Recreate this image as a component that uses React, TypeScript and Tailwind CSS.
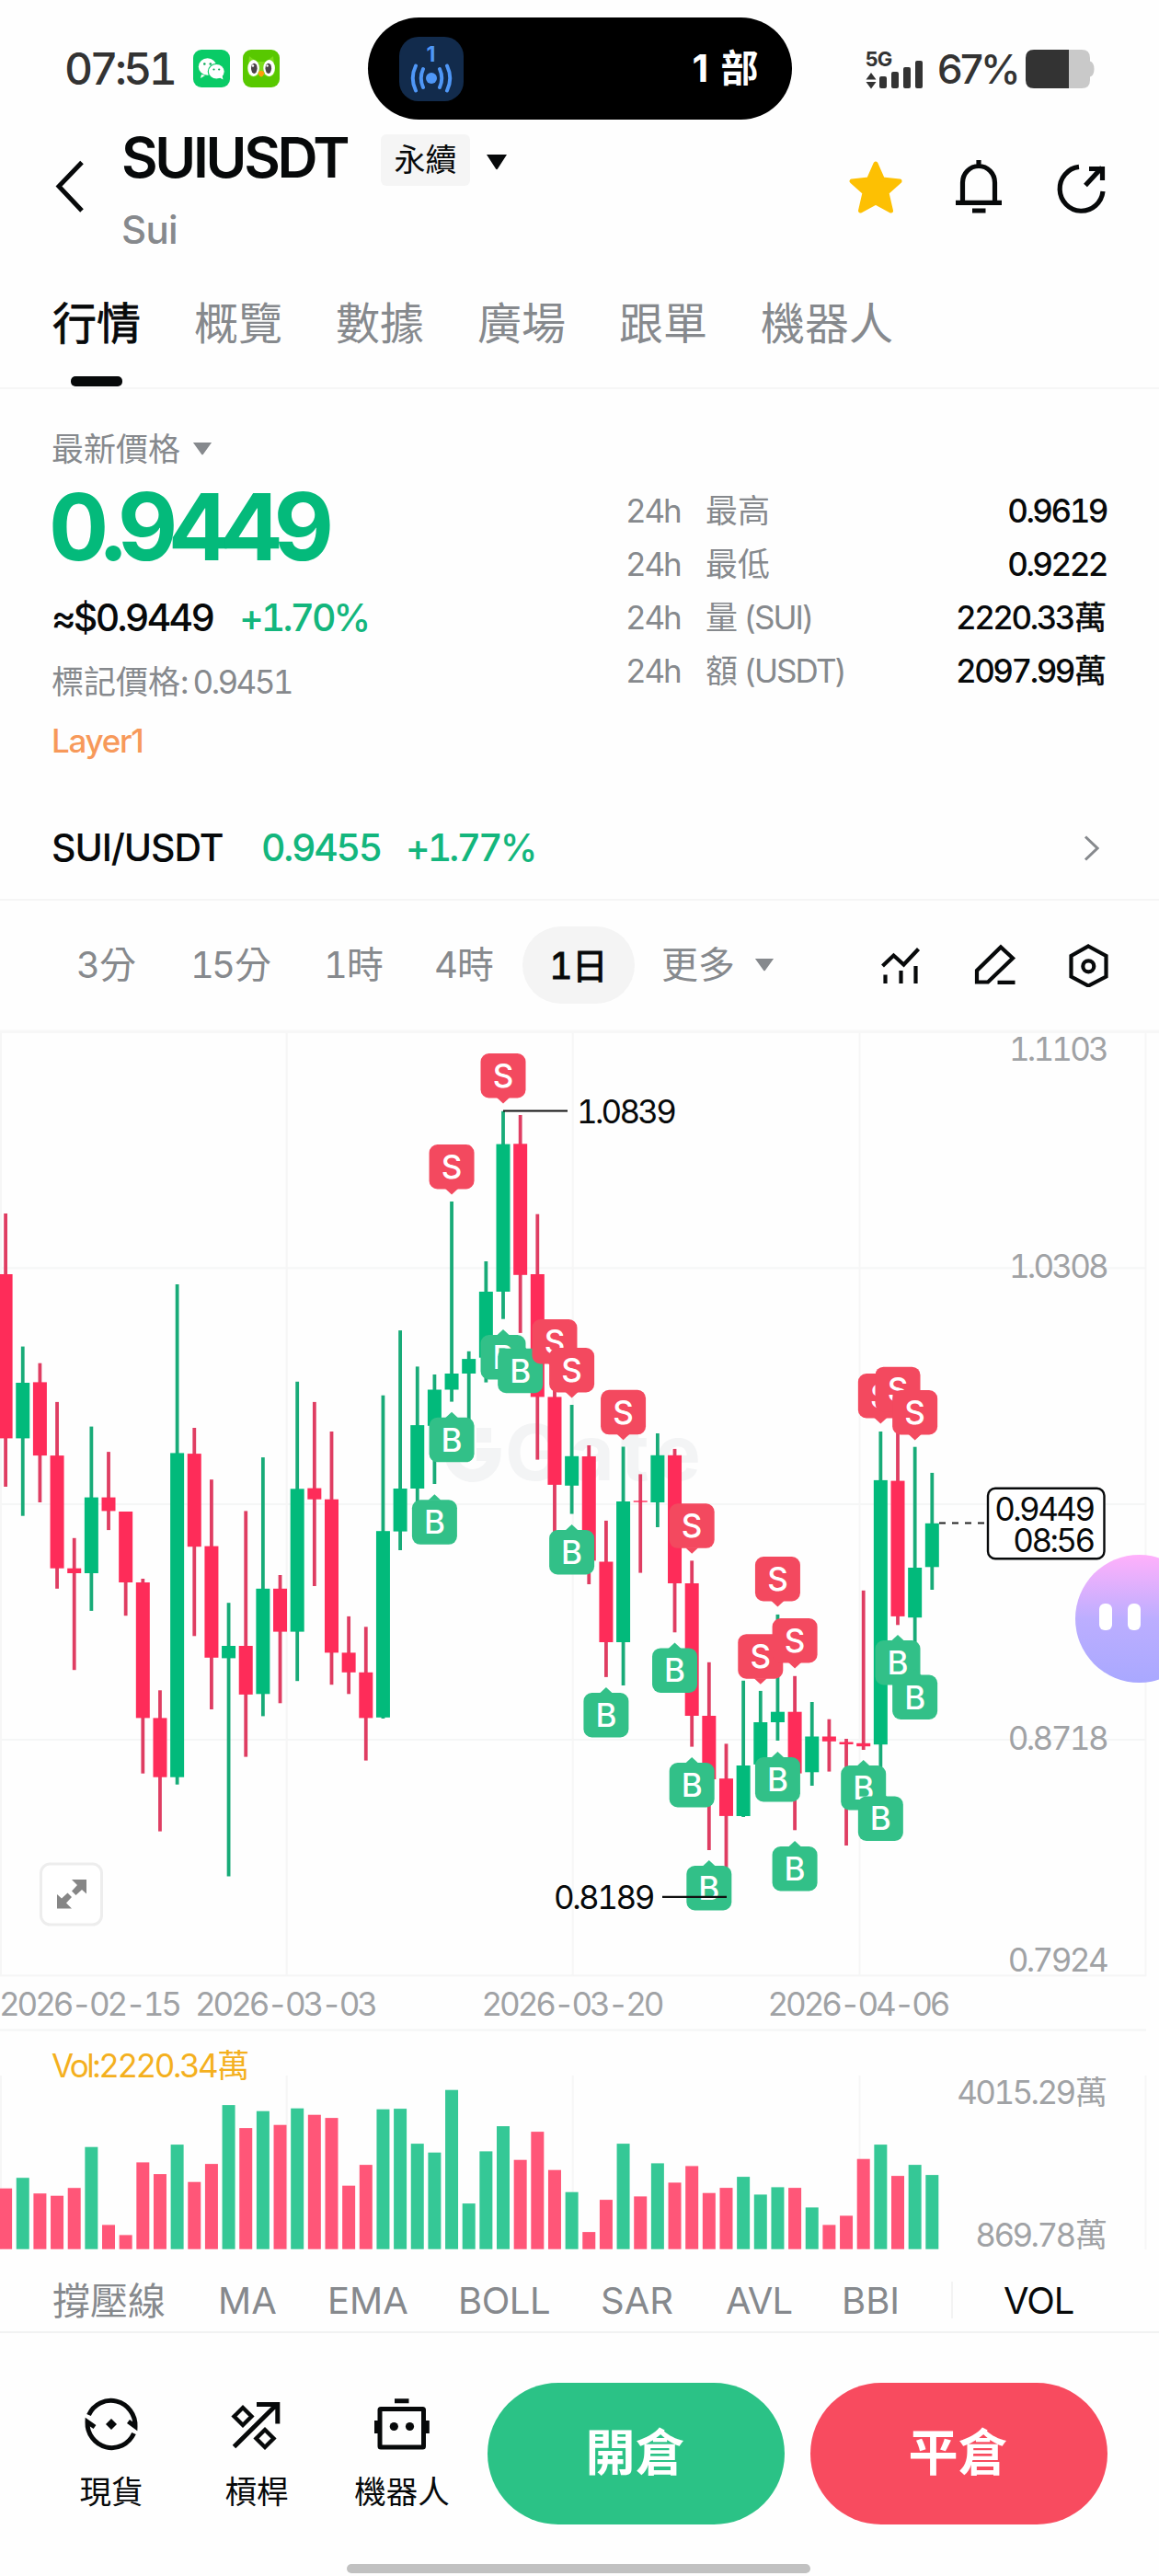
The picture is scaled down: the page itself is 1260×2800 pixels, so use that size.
import type { ReactNode } from "react";

type Candle = [up: 0 | 1, high: number, top: number, bottom: number, low: number, volume: number];

const PITCH = 18.652;
const cx = (i: number) => 6.1 + PITCH * i;

const candles: Candle[] = [
  [0, 1319, 1385, 1563.4, 1616, 66],
  [1, 1463.6, 1503, 1563.4, 1647.7, 77.5],
  [0, 1481.7, 1502.4, 1582.1, 1633, 60.5],
  [0, 1523.9, 1582.1, 1704.7, 1726.8, 58],
  [0, 1671.8, 1704.7, 1710, 1815.2, 66.5],
  [1, 1550.6, 1627.6, 1710, 1750.9, 111],
  [0, 1578.1, 1627.6, 1642.4, 1663.1, 26.3],
  [0, 1643, 1643, 1720, 1756.2, 15.3],
  [0, 1716, 1720, 1867.4, 1927.7, 94.3],
  [0, 1837.3, 1867.4, 1931.7, 1990.6, 81.6],
  [1, 1396, 1579.4, 1931.7, 1939.7, 113.6],
  [0, 1552, 1580.1, 1681.2, 1778.3, 73],
  [0, 1608.2, 1680.6, 1801.8, 1858, 92.6],
  [1, 1742.2, 1789, 1802.4, 2039.5, 156.6],
  [0, 1642.4, 1789, 1841.9, 1909.6, 131.6],
  [1, 1584.1, 1726.8, 1841.3, 1865.4, 150],
  [0, 1712, 1726.8, 1773.6, 1851.3, 135],
  [1, 1501.8, 1618.3, 1773.6, 1827.2, 153],
  [0, 1523.9, 1617.6, 1629.7, 1724, 146],
  [0, 1556, 1629.7, 1796.4, 1831.2, 142.6],
  [0, 1756.9, 1796.4, 1817.8, 1841.3, 69],
  [0, 1768.3, 1817.8, 1867.4, 1913.6, 91.6],
  [1, 1516.7, 1664.2, 1866.8, 1868, 152],
  [1, 1446.1, 1618, 1664.6, 1685, 152.6],
  [1, 1485.4, 1549.1, 1618, 1640, 114.6],
  [1, 1494, 1510.5, 1549.8, 1613, 105],
  [1, 1306, 1493, 1510.5, 1523.6, 173],
  [1, 1468.8, 1477.1, 1493, 1550, 49.6],
  [1, 1371, 1404, 1475.7, 1502.6, 106.3],
  [1, 1207.8, 1243.6, 1404, 1433.7, 133.6],
  [0, 1212, 1243.3, 1385.8, 1448.9, 97],
  [0, 1319.7, 1385, 1518.4, 1586.6, 127.6],
  [0, 1500, 1518.4, 1613.9, 1666, 86],
  [1, 1527, 1582.8, 1614.8, 1645.5, 62],
  [0, 1571, 1583, 1696.4, 1722, 18.6],
  [0, 1652.9, 1697.5, 1785, 1822.9, 53.6],
  [1, 1572.5, 1632, 1785, 1832, 114.6],
  [0, 1602.4, 1631.3, 1632.7, 1709.6, 57.3],
  [1, 1558, 1581.8, 1633, 1660, 93.3],
  [0, 1574.9, 1581.8, 1721, 1774.3, 72.3],
  [0, 1696.4, 1721, 1865, 1898.6, 90.3],
  [0, 1806.8, 1865, 1934, 2011, 61],
  [0, 1895.4, 1933.2, 1973.9, 2062, 66.6],
  [1, 1826.8, 1919, 1974, 1975, 78.6],
  [1, 1837.9, 1872, 1917.9, 1920, 59.3],
  [1, 1754.9, 1860.7, 1872, 1892, 67.3],
  [0, 1821.8, 1860.7, 1927.6, 1989.3, 66.6],
  [1, 1850, 1887.5, 1926.3, 1941, 45.3],
  [0, 1868.7, 1887.5, 1892.8, 1925.6, 26.3],
  [0, 1890, 1893.5, 1896, 2006, 36.3],
  [0, 1728.8, 1894.8, 1898.2, 1902, 98],
  [1, 1556, 1608.9, 1896.2, 1923, 113.6],
  [0, 1540, 1609.6, 1756.9, 1766.3, 79.6],
  [1, 1572.7, 1704, 1758.2, 1786, 91.6],
  [1, 1600.9, 1655.8, 1703.3, 1728, 80.6],
];

type Trade = ["B" | "S", number, number];
const trades: Trade[] = [
  ["B", 25, 1630.3], ["S", 26, 1244], ["B", 26, 1540.8], ["S", 29, 1145], ["B", 29, 1451],
  ["B", 30, 1465.7], ["S", 32, 1434], ["S", 33, 1465], ["B", 33, 1663], ["B", 35, 1840],
  ["S", 36, 1510.8], ["B", 39, 1791.4], ["S", 40, 1634.3], ["B", 40, 1916], ["B", 41, 2028],
  ["S", 44, 1776.2], ["S", 45, 1692], ["B", 45, 1910], ["S", 46, 1759], ["B", 46, 2007],
  ["B", 50, 1919], ["S", 51, 1493], ["B", 51, 1952.4], ["S", 52, 1485.7], ["B", 52, 1783],
  ["S", 53, 1511], ["B", 53, 1820.5],
];

const gridX = [1, 311.7, 622.7, 934.5, 1245.5];
const gridY = [1378.3, 1635, 1891, 2147.3];

function Caret({ className }: { className: string }) {
  return (
    <svg viewBox="0 0 24 16" className={className} preserveAspectRatio="none">
      <path d="M1 0H23L13 14.5Q12 16 11 14.5Z" fill="currentColor" />
    </svg>
  );
}

function StatusBar() {
  return (
    <div className="flex h-[132px] shrink-0 pt-[17px]">
      <div className="flex h-[115px] w-full items-center pl-[70px] text-[#333333]">
        <span className="w-[140px] text-[48px] leading-none font-medium tracking-[-3.6px] tabular-nums">07:51</span>
        <svg width="40" height="41" viewBox="0 0 40 41">
          <rect width="40" height="41" rx="9" fill="#09cb66" />
          <path d="M9 27L8 31L13 28Z" fill="#fff" />
          <ellipse cx="15.6" cy="18.5" rx="9.8" ry="9.3" fill="#fff" />
          <ellipse cx="25.3" cy="23.8" rx="9" ry="8.4" fill="#fff" stroke="#09cb66" strokeWidth="1.2" />
          <path d="M28 30L32.5 32.5L31.5 28Z" fill="#fff" />
          <circle cx="12.3" cy="15.5" r="1.3" fill="#09a958" />
          <circle cx="18.8" cy="15.5" r="1.3" fill="#09a958" />
          <circle cx="22.5" cy="21.5" r="1.1" fill="#09a958" />
          <circle cx="28.2" cy="21.5" r="1.1" fill="#09a958" />
        </svg>
        <svg width="40" height="41" viewBox="0 0 40 41" className="ml-[14px]">
          <rect width="40" height="41" rx="9" fill="#58c800" />
          <path d="M7 7L15 13H25L33 7L35 24Q33 31 26 29L20 26L14 29Q7 31 5 24Z" fill="#7bdb1a" />
          <ellipse cx="11.6" cy="20" rx="6.3" ry="9" fill="#fff" />
          <ellipse cx="28.6" cy="20" rx="6.3" ry="9" fill="#fff" />
          <ellipse cx="12.3" cy="20.3" rx="3.3" ry="5.6" fill="#4a4347" />
          <ellipse cx="27.8" cy="20.3" rx="3.3" ry="5.6" fill="#4a4347" />
          <circle cx="11" cy="17.5" r="1.2" fill="#fff" />
          <circle cx="26.6" cy="17.5" r="1.2" fill="#fff" />
          <path d="M16.5 25Q20 20.500 23.500 25Q22 29.500 20 29.500Q18 29.500 16.500 25Z" fill="#ff9d0a" />
        </svg>
        <div className="ml-[95.500px] flex h-[111px] w-[461px] shrink-0 items-center justify-between rounded-full bg-black pr-[36px] pl-[34px]">
          <div className="flex h-[70px] w-[70px] flex-col items-center rounded-[21px] bg-[#122b4c] pt-[9px] text-[#4f97f7]">
            <span className="text-[23px] leading-[20px] font-bold">1</span>
            <svg width="50" height="32" viewBox="0 0 50 32" fill="none" stroke="currentColor" strokeWidth="4" strokeLinecap="round">
              <circle cx="25" cy="16" r="6" fill="currentColor" stroke="none" />
              <path d="M16 6Q11.500 16 16 26M34 6Q38.500 16 34 26M8 2.500Q1.500 16 8 29.500M42 2.500Q48.500 16 42 29.500" />
            </svg>
          </div>
          <span className="flex text-[41px] leading-none font-bold text-white"><span className="w-[31px] whitespace-pre">1 </span>部</span>
        </div>
        <div className="ml-[79px] flex h-[44px] w-[67px] shrink-0">
          <div className="flex w-[16px] flex-col pl-px">
            <span className="h-[24px] text-[22px] leading-[22px] font-bold tracking-[-0.800px] whitespace-nowrap">5G</span>
            <svg width="12" height="18" viewBox="0 0 12 18" className="mt-[2px]" fill="currentColor">
              <path d="M6 0L11.500 7.500H0.500ZM6 17.500L0.500 10H11.500Z" />
            </svg>
          </div>
          <div className="flex items-end gap-[5px] pb-px">
            <span className="h-[13px] w-[8px] rounded-[2px] bg-[#333333]" />
            <span className="h-[18px] w-[8px] rounded-[2px] bg-[#333333]" />
            <span className="h-[23px] w-[8px] rounded-[2px] bg-[#333333]" />
            <span className="h-[30px] w-[8px] rounded-[2px] bg-[#333333]" />
          </div>
        </div>
        <span className="ml-[12px] w-[84px] shrink-0 text-[44px] leading-none font-medium tracking-[-4.700px] whitespace-nowrap tabular-nums">67%</span>
        <svg width="75" height="42" viewBox="0 0 75 42" className="ml-[12px] shrink-0">
          <path d="M47 0H61Q70 0 70 9V12.500Q74.500 14 74.500 21Q74.500 28 70 29.500V33Q70 42 61 42H47Z" fill="#c9c9c9" />
          <path d="M9 0H47V42H9Q0 42 0 33V9Q0 0 9 0Z" fill="#333333" />
        </svg>
      </div>
    </div>
  );
}

function Header() {
  return (
    <header className="flex h-[148px] shrink-0 pt-[14px] text-[#07090a]">
      <svg width="34" height="60" viewBox="0 0 34 60" className="mt-[27px] ml-[60px]" fill="none" stroke="currentColor" strokeWidth="5">
        <path d="M29 3.500L4 29.500L29 56" />
      </svg>
      <div className="ml-[38px]">
        <div className="flex h-[56px]">
          <h1 className="w-[248px] text-[61px] leading-[50px] font-semibold tracking-[-3.300px] text-[#07090a]">SUIUSDT</h1>
          <span className="ml-[34px] flex h-[56px] w-[97px] items-center justify-center rounded-[6px] bg-[#f5f5f5] text-[34px] leading-none">永續</span>
          <Caret className="mt-[22px] ml-[17px] h-[17px] w-[24px]" />
        </div>
        <p className="mt-[28px] text-[42px] leading-[40px] font-medium tracking-[-0.700px] text-[#86898d]">Sui</p>
      </div>
      <div className="mt-[28px] ml-[370px] flex h-[60px] gap-[50px]">
        <svg width="62" height="60" viewBox="0 0 62 60" className="-ml-px">
          <path d="M31 4L38.500 21L57 23L43 35.500L47.500 55L31 46L14.500 55L19 35.500L5 23L23.500 21Z" fill="#fdc003" stroke="#fdc003" strokeWidth="5" strokeLinejoin="round" />
        </svg>
        <svg width="62" height="60" viewBox="0 0 62 60" fill="none" stroke="currentColor" strokeWidth="5.200">
          <path d="M13.500 46V24.500A17.500 18 0 0 1 48.500 24.500V46M6 46.300H56M31 8V0M24 55H38.500" />
        </svg>
        <svg width="62" height="60" viewBox="0 0 62 60" fill="none" stroke="currentColor" strokeWidth="5.200">
          <path d="M28 7.400A23.500 24 0 1 0 54 34M35 27.500L53 8M39 9.500H53.500V22" />
        </svg>
      </div>
    </header>
  );
}

function Tabs() {
  return (
    <nav className="flex h-[143px] shrink-0 gap-[58px] border-b-2 border-[#f6f6f6] pt-[48px] pl-[57px] text-[48px] leading-[48px] text-[#86898d]">
      <div className="flex flex-col items-center text-[#07090a] [-webkit-text-stroke:0.8px_#07090a]">
        行情
        <span className="mt-[33px] h-[11px] w-[56px] rounded-[5px] bg-[#07090a]" />
      </div>
      <span>概覽</span>
      <span>數據</span>
      <span>廣場</span>
      <span>跟單</span>
      <span>機器人</span>
    </nav>
  );
}

function StatRow({ label, unit, value, suffix }: { label: string; unit?: string; value: string; suffix?: string }) {
  return (
    <div className="flex h-[58px] items-center text-[35px] leading-none whitespace-pre text-[#86898d]">
      <span className="w-[87px] tracking-[-2.200px] tabular-nums">24h</span>
      <span>{label}</span>
      {unit && <span className="ml-[7px] tracking-[-1.900px]">{unit}</span>}
      <span className="ml-auto flex items-center font-medium text-[#07090a]">
        <span className="tracking-[-2.500px] tabular-nums">{value}</span>
        {suffix && <span className="ml-[1px] font-normal [-webkit-text-stroke:0.5px_#07090a]">{suffix}</span>}
      </span>
    </div>
  );
}

function PriceSummary() {
  return (
    <section className="flex h-[401px] shrink-0 justify-between pr-[57px] pl-[56px]">
      <div className="pt-[45px]">
        <div className="flex h-[40px] items-center text-[35px] leading-none text-[#86898d]">
          最新價格
          <Caret className="ml-[13px] h-[14px] w-[22px]" />
        </div>
        <p className="mt-[24px] -ml-[3px] text-[101px] leading-[80px] font-bold tracking-[-8.700px] text-[#04ba7b] tabular-nums">0.9449</p>
        <div className="mt-[39px] flex gap-[29px] text-[41px] leading-[40px] font-medium tabular-nums">
          <span className="tracking-[-2.700px] text-[#07090a]">≈$0.9449</span>
          <span className="tracking-[-3px] text-[#13b67d]">+1.70%</span>
        </div>
        <div className="mt-[30px] text-[35px] leading-[40px] text-[#86898d]">
          標記價格<span className="tracking-[-2.600px] whitespace-pre tabular-nums">: 0.9451</span>
        </div>
        <p className="mt-[24px] text-[35px] leading-[40px] font-medium tracking-[-1.300px] text-[#f7995a]">Layer1</p>
      </div>
      <div className="w-[523px] pt-[103px]">
        <StatRow label="最高" value="0.9619" />
        <StatRow label="最低" value="0.9222" />
        <StatRow label="量" unit="(SUI)" value="2220.33" suffix="萬" />
        <StatRow label="額" unit="(USDT)" value="2097.99" suffix="萬" />
      </div>
    </section>
  );
}

function SpotPair() {
  return (
    <section className="flex h-[155px] shrink-0 border-b-2 border-[#f5f5f5] pt-[77px] pr-[65px] pl-[56px] text-[41px] leading-[40px] font-medium">
      <span className="w-[228px] tracking-[-1.100px] text-[#07090a]">SUI/USDT</span>
      <span className="w-[157px] tracking-[-2.300px] text-[#13b67d] tabular-nums">0.9455</span>
      <span className="tracking-[-2.900px] text-[#13b67d] tabular-nums">+1.77%</span>
      <svg width="17" height="28" viewBox="0 0 17 28" className="mt-[7px] ml-auto" fill="none" stroke="#86898d" strokeWidth="3">
        <path d="M2 1.500L15 14L2 26.500" />
      </svg>
    </section>
  );
}

function Period({ n, unit }: { n: string; unit: string }) {
  return (
    <span className="flex items-center">
      <span className="tracking-[-3px] tabular-nums">{n}</span>
      <span className="ml-[2px]">{unit}</span>
    </span>
  );
}

function Periods() {
  return (
    <section className="flex h-[140px] shrink-0 items-center pl-[83px] text-[40px] leading-none text-[#86898d]">
      <div className="w-[124px]"><Period n="3" unit="分" /></div>
      <div className="w-[145px]"><Period n="15" unit="分" /></div>
      <div className="w-[120px]"><Period n="1" unit="時" /></div>
      <div className="w-[96px]"><Period n="4" unit="時" /></div>
      <div className="flex h-[84px] w-[122px] items-center justify-center rounded-full bg-[#f4f4f4] text-[39px] text-[#07090a] [-webkit-text-stroke:1px_#07090a]">
        <Period n="1" unit="日" />
      </div>
      <span className="ml-[29px]">更多</span>
      <Caret className="ml-[21px] h-[14px] w-[22px]" />
      <div className="ml-[113px] flex gap-[54px] text-[#07090a]">
        <svg width="48" height="48" viewBox="0 0 48 48" fill="none" stroke="currentColor" strokeWidth="4.200">
          <path d="M4.500 25L16.500 13.500L27.500 23.500L43.500 6.500M7.500 34.500V44M24.500 30V44M40.500 25V44" />
        </svg>
        <svg width="48" height="48" viewBox="0 0 48 48" fill="none" stroke="currentColor" strokeWidth="4.200">
          <path d="M5 42.500V30L31 4.500L44 16.500L17 42.500ZM27.500 42.800H46.500" />
        </svg>
        <svg width="48" height="48" viewBox="0 0 48 48" fill="none" stroke="currentColor" strokeWidth="4.200">
          <path d="M24.200 3.500L43.500 14V36.500L24.200 46.500L5.500 36.500V14Z" />
          <circle cx="24.300" cy="25.300" r="6" />
        </svg>
      </div>
    </section>
  );
}

function TradeTag({ side, x, y }: { side: "B" | "S"; x: number; y: number }) {
  const buy = side === "B";
  return (
    <g>
      <rect x={x - 24.5} y={y} width="49" height="48.500" rx="9" fill={buy ? "#32c088" : "#f3495f"} />
      <path
        d={buy ? `M${x - 7} ${y + 0.5}L${x} ${y - 6}L${x + 7} ${y + 0.5}Z` : `M${x - 7} ${y + 48}L${x} ${y + 54.5}L${x + 7} ${y + 48}Z`}
        fill={buy ? "#32c088" : "#f3495f"}
      />
      <text x={x} y={y + 37} textAnchor="middle" className="fill-white text-[35px] font-medium">{side}</text>
    </g>
  );
}

function Label({ x, y, anchor = "start", children, className }: { x: number; y: number; anchor?: "start" | "middle" | "end"; children: ReactNode; className: string }) {
  return (
    <text x={x} y={y + 12.7} textAnchor={anchor} className={`text-[35px] tabular-nums ${className}`}>{children}</text>
  );
}

function Chart() {
  return (
    <svg width="1260" height="1331" viewBox="0 1119 1260 1331" className="shrink-0">
      <rect x="0" y="1119.500" width="1260" height="3.500" fill="#f7f7f7" />
      {gridY.map((y) => <rect key={y} x="0" y={y - 1} width="1246" height="2" fill="#f5f6f6" />)}
      {gridX.map((x) => (
        <g key={x} fill="#f6f6f6">
          <rect x={x - 1} y="1123" width="2" height="1025" />
          <rect x={x - 1} y="2256" width="2" height="189" />
        </g>
      ))}
      <rect x="0" y="2205.500" width="1246" height="2" fill="#f3f4f4" />

      <path d="M514 1557A23.500 23.500 0 1 0 537.500 1581H518" fill="none" stroke="#f3f4f5" strokeWidth="14" />
      <rect x="518" y="1552" width="16" height="16" fill="#f3f4f5" />
      <text x="549" y="1609" className="fill-[#f3f4f5] text-[84px] font-bold tracking-[7px]">Gate</text>

      {candles.map(([up, high, top, bottom, low, volume], i) => (
        <g key={i}>
          <rect x={cx(i) - 1.9} y={high} width="3.800" height={low - high} fill={up ? "#18ab78" : "#df3d62"} />
          <rect x={cx(i) - 7.5} y={top} width="15" height={bottom - top} fill={up ? "#02ba7b" : "#fe2c59"} />
          <rect x={cx(i) - 7} y={2444.7 - volume} width="14" height={volume} fill={up ? "#35c896" : "#ff5678"} />
        </g>
      ))}
      {trades.map(([side, i, y]) => <TradeTag key={`${side}${i}`} side={side} x={cx(i)} y={y} />)}

      <path d="M547 1207.500H617M720 2061.800H790" stroke="#111" strokeWidth="2.200" />
      <Label x={627} y={1208} className="fill-[#07090a] tracking-[-2.800px]">1.0839</Label>
      <Label x={602} y={2062.5} className="fill-[#07090a] tracking-[-2.500px]">0.8189</Label>

      <g>
        <Label x={1203} y={1140} anchor="end" className="fill-[#a0a2a5] tracking-[-2.800px]">1.1103</Label>
        <Label x={1203} y={1376} anchor="end" className="fill-[#a0a2a5] tracking-[-2.800px]">1.0308</Label>
        <Label x={1203} y={1889.5} anchor="end" className="fill-[#a0a2a5] tracking-[-2.600px]">0.8718</Label>
        <Label x={1203} y={2130.5} anchor="end" className="fill-[#a0a2a5] tracking-[-2.600px]">0.7924</Label>
      </g>

      <path d="M1021 1655.500H1074" stroke="#222" strokeWidth="2.200" strokeDasharray="7 7" />
      <rect x="1074" y="1617.800" width="126.500" height="76.500" rx="8" fill="#fff" stroke="#07090a" strokeWidth="2.400" />
      <Label x={1188.5} y={1640.5} anchor="end" className="fill-[#07090a] tracking-[-2.600px]">0.9449</Label>
      <Label x={1188.5} y={1674.5} anchor="end" className="fill-[#07090a] tracking-[-2.600px]">08:56</Label>

      <rect x="44.500" y="2026" width="66" height="66" rx="10" fill="#fff" stroke="#ededed" strokeWidth="3" />
      <path d="M78 2043H94V2058.500L89 2054L82.500 2060L78 2055.500L84 2049ZM78 2074.500H62V2059L67 2063.500L73.500 2057.500L78 2062L72 2068.500Z" fill="#868686" />

      <Label x={-1} y={2178.5} className="fill-[#a0a2a5] tracking-[-3.100px]">2026-02-15</Label>
      <Label x={310} y={2178.5} anchor="middle" className="fill-[#a0a2a5] tracking-[-3.100px]">2026-03-03</Label>
      <Label x={621.5} y={2178.5} anchor="middle" className="fill-[#a0a2a5] tracking-[-3.100px]">2026-03-20</Label>
      <Label x={932.5} y={2178.5} anchor="middle" className="fill-[#a0a2a5] tracking-[-3.100px]">2026-04-06</Label>

      <Label x={56} y={2245.5} className="fill-[#f4b01e] tracking-[-2.500px]">Vol:2220.34<tspan dx="1">萬</tspan></Label>
      <Label x={1201.5} y={2274} anchor="end" className="fill-[#a0a2a5] tracking-[-2.600px]">4015.29<tspan dx="1.500">萬</tspan></Label>
      <Label x={1201.5} y={2429} anchor="end" className="fill-[#a0a2a5] tracking-[-2.600px]">869.78<tspan dx="1.500">萬</tspan></Label>
    </svg>
  );
}

function Indicators() {
  return (
    <nav className="flex h-[86px] shrink-0 border-b-2 border-[#f1f2f2] pt-[31px] pl-[57px] text-[40px] leading-[40px] text-[#86898d]">
      <span className="w-[180px] text-[41px]">撐壓線</span>
      <span className="w-[119px]">MA</span>
      <span className="w-[142px]">EMA</span>
      <span className="w-[155px] tracking-[-0.500px]">BOLL</span>
      <span className="w-[136px]">SAR</span>
      <span className="w-[126px] tracking-[-1px]">AVL</span>
      <span className="w-[119px]">BBI</span>
      <span className="-mt-px h-[40px] w-[2px] bg-[#f3f3f3]" />
      <span className="ml-[55px] tracking-[-1px] text-[#07090a]">VOL</span>
    </nav>
  );
}

function Shortcut({ label, children }: { label: string; children: ReactNode }) {
  return (
    <div className="flex w-[158px] flex-col items-center">
      <svg width="60" height="60" viewBox="0 0 60 60" fill="none" stroke="currentColor" strokeWidth="5">{children}</svg>
      <span className="mt-[24px] text-[34.500px] leading-[40px]">{label}</span>
    </div>
  );
}

function ActionBar() {
  return (
    <footer className="flex h-[251px] shrink-0 pt-[54px] pl-[42px]">
      <div className="flex pt-[15px] text-[#07090a]">
        <Shortcut label="現貨">
          <path d="M5.500 20A26.500 27 0 0 1 56 32.500L48.500 27M54.500 40A26.500 27 0 0 1 4 27.500L12 33" />
          <path d="M30 24L36 30L30 36L24 30Z" fill="currentColor" stroke="none" />
        </Shortcut>
        <Shortcut label="槓桿">
          <path d="M5.500 54.500L52 8.500M30 8.500H52.800V29.500" />
          <path d="M15 12L24.500 21.500L15 31L5.500 21.500ZM39 36L48.500 45.500L39 55L29.500 45.500Z" strokeWidth="4.400" />
        </Shortcut>
        <Shortcut label="機器人">
          <rect x="6" y="13.500" width="47.500" height="41.500" rx="1" />
          <path d="M22 4.700H37.500M2.200 26V40M57.300 26V40" />
          <circle cx="21.300" cy="32.500" r="4.600" fill="currentColor" stroke="none" />
          <circle cx="38.500" cy="32.500" r="4.600" fill="currentColor" stroke="none" />
        </Shortcut>
      </div>
      <div className="ml-[14px] flex h-[154px] gap-[28px] text-[54px] font-bold text-white">
        <button className="w-[323px] rounded-full bg-[#2bc286] pr-[2px] pb-[2px]">開倉</button>
        <button className="w-[323px] rounded-full bg-[#f84b5f] pr-[2px] pb-[2px]">平倉</button>
      </div>
    </footer>
  );
}

function Assistant() {
  return (
    <div className="absolute top-[1690px] left-[1169px] flex h-[139px] w-[139px] justify-start gap-[17px] rounded-full bg-linear-to-b from-[#ffb0fb] via-[#bcaeff] to-[#a9a8ff] pt-[53px] pl-[26px]">
      <span className="h-[29px] w-[14px] rounded-[6px] bg-white" />
      <span className="h-[29px] w-[14px] rounded-[6px] bg-white" />
    </div>
  );
}

export default function App() {
  return (
    <div className="relative flex h-[2800px] w-[1260px] flex-col overflow-hidden bg-[#fefefe] font-['Inter','Noto_Sans_CJK_TC',sans-serif]">
      <StatusBar />
      <Header />
      <Tabs />
      <PriceSummary />
      <SpotPair />
      <Periods />
      <Chart />
      <Indicators />
      <ActionBar />
      <div className="mr-[379px] ml-[377px] h-[10px] shrink-0 rounded-full bg-[#c1c1c1]" />
      <Assistant />
    </div>
  );
}
